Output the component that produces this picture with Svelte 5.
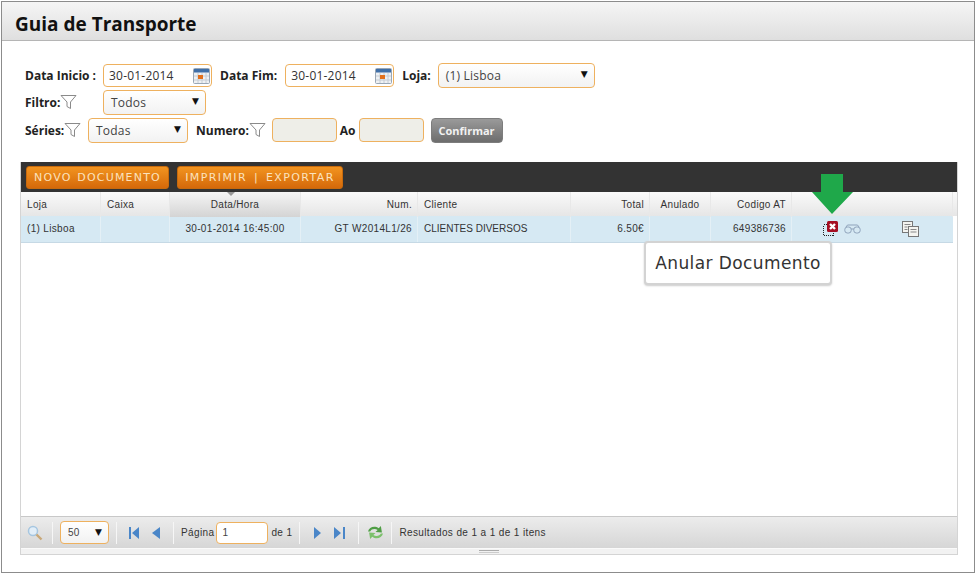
<script lang="ts">
  const cols = [
    { label: 'Loja', value: '(1) Lisboa', align: 'left', w: 80 },
    { label: 'Caixa', value: '', align: 'left', w: 69 },
    { label: 'Data/Hora', value: '30-01-2014 16:45:00', align: 'center', w: 131, sorted: true },
    { label: 'Num.', value: 'GT W2014L1/26', align: 'right', w: 117 },
    { label: 'Cliente', value: 'CLIENTES DIVERSOS', align: 'left', w: 153, tight: true },
    { label: 'Total', value: '6.50€', align: 'right', w: 79 },
    { label: 'Anulado', value: '', align: 'center', w: 61 },
    { label: 'Codigo AT', value: '649386736', align: 'right', w: 81 }
  ];
  const template = cols.map((c) => c.w + 'px').join(' ') + ' 161px';
</script>

{#snippet funnel()}
  <svg class="funnel" width="17" height="16" viewBox="0 0 17 16">
    <path d="M1 1.500h15L10.500 8v6.500L7 12.500V8z" fill="#fff" stroke="#8a8a8a" />
  </svg>
{/snippet}

{#snippet calendar()}
  <svg class="cal" width="17" height="16" viewBox="0 0 17 16">
    <rect x="0.5" y="0.5" width="16" height="15" rx="1" fill="#eef1f4" stroke="#9aa7b5" />
    <rect x="1" y="1" width="15" height="3.500" fill="#3f6fa8" />
    <path d="M1 8h15M1 12h15M5 5v10M9 5v10M13 5v10" stroke="#c6ccd3" />
    <rect x="5" y="7" width="5" height="4" fill="#e2701c" />
  </svg>
{/snippet}

<div class="page">
  <header class="title"><h1>Guia de Transporte</h1></header>

  <form class="filters">
    <div class="row row1">
      <span class="lbl first">Data Inicio :</span>
      <span class="field date">30-01-2014 {@render calendar()}</span>
      <span class="lbl l8">Data Fim:</span>
      <span class="field date">30-01-2014 {@render calendar()}</span>
      <span class="lbl l8 l7">Loja:</span>
      <span class="field select loja">(1) Lisboa <i>▼</i></span>
    </div>
    <div class="row row2">
      <span class="lbl filtro">Filtro:{@render funnel()}</span>
      <span class="field select todos">Todos <i>▼</i></span>
    </div>
    <div class="row row3">
      <span class="lbl series">Séries:{@render funnel()}</span>
      <span class="field select todas">Todas <i>▼</i></span>
      <span class="lbl l8 numero">Numero:{@render funnel()}</span>
      <span class="field blank"></span>
      <span class="lbl ao">Ao</span>
      <span class="field blank"></span>
      <button type="button" class="confirm">Confirmar</button>
    </div>
  </form>

  <section class="grid">
    <div class="toolbar">
      <button type="button" class="orange novo">NOVO DOCUMENTO</button>
      <button type="button" class="orange imprimir">IMPRIMIR | EXPORTAR</button>
    </div>

    <div class="thead" style="grid-template-columns: {template} 1fr">
      {#each cols as c}
        <div class="th {c.align}" class:sorted={c.sorted}>{c.label}</div>
      {/each}
      <div class="th"></div>
      <div class="th last"></div>
    </div>

    <div class="tr" style="grid-template-columns: {template}">
      {#each cols as c}
        <div class="td {c.align}" class:tight={c.tight}>{c.value}</div>
      {/each}
      <div class="td actions">
        <svg class="del" width="15" height="15" viewBox="0 0 15 15">
          <rect x="0.5" y="3.500" width="10" height="11" fill="none" stroke="#222" stroke-dasharray="1 1" shape-rendering="crispEdges" />
          <rect x="4" y="0" width="11" height="11" rx="1.500" fill="#a50e22" />
          <path d="M7 3l5 5M12 3l-5 5" stroke="#fff" stroke-width="2.400" />
        </svg>
        <svg class="glasses" width="17" height="10" viewBox="0 0 17 10">
          <rect x="0.8" y="3" width="6.400" height="6" rx="2.500" fill="none" stroke="#8fa3bb" />
          <rect x="9.800" y="3" width="6.400" height="6" rx="2.500" fill="none" stroke="#8fa3bb" />
          <path d="M7 5h3M2 3l1.500-2h10L15 3" fill="none" stroke="#8fa3bb" />
        </svg>
        <svg class="copy" width="17" height="16" viewBox="0 0 17 16">
          <rect x="0.5" y="0.5" width="10" height="11" fill="#f4f4f0" stroke="#777" />
          <rect x="6.5" y="5.500" width="10" height="10" fill="#f4f4f0" stroke="#777" />
          <path d="M2.500 3.500h6M2.500 6h3M2.500 8.500h3M8.500 8.500h6M8.500 11h6" stroke="#888" />
        </svg>
      </div>
    </div>

    <div class="body"></div>

    <footer class="pager">
      <svg class="zoom" width="16" height="16" viewBox="0 0 16 16">
        <circle cx="6" cy="6" r="4.500" fill="#e2eef8" stroke="#a6c6e0" stroke-width="1.500" />
        <path d="M9.500 9.500l5 5" stroke="#c9a878" stroke-width="2.400" />
      </svg>
      <span class="sep"></span>
      <span class="field select size">50 <i>▼</i></span>
      <span class="sep"></span>
      <svg class="first-ic" width="11" height="12" viewBox="0 0 11 12"><path d="M0 0h2v12H0zM10 0v12L3 6z" fill="#4a86c8" /></svg>
      <svg class="prev" width="8" height="12" viewBox="0 0 8 12"><path d="M8 0v12L0 6z" fill="#4a86c8" /></svg>
      <span class="sep"></span>
      <span class="txt">Página</span>
      <span class="field page-no">1</span>
      <span class="txt">de 1</span>
      <span class="sep"></span>
      <svg class="next" width="7" height="12" viewBox="0 0 7 12"><path d="M0 0v12l7-6z" fill="#4a86c8" /></svg>
      <svg class="last-ic" width="11" height="12" viewBox="0 0 11 12"><path d="M0 0v12l7-6zM9 0h2v12H9z" fill="#4a86c8" /></svg>
      <span class="sep"></span>
      <svg class="refresh" width="17" height="15" viewBox="2 1 14 14">
        <path d="M2 7c1-4 6-6 10-3l2-2 1 6-6-.5 2-1.800C9 4 5 4.500 4 7z" fill="#4f9e45" />
        <path d="M16 9c-1 4-6 6-10 3l-2 2-1-6 6 .5-2 1.800c2 1.700 6 1.200 7-1.300z" fill="#7cc06c" />
      </svg>
      <span class="sep"></span>
      <span class="txt">Resultados de 1 a 1 de 1 itens</span>
    </footer>
    <div class="resize"><span></span></div>

    <svg class="arrow" width="42" height="41" viewBox="0 0 42 41">
      <path d="M10 0h22v18h10L21 40 1 18h9z" fill="#1fa84a" />
    </svg>
    <div class="tooltip">Anular Documento</div>
  </section>
</div>

<style>
  :global(body) {
    margin: 0;
    background: #fff;
  }

  .page {
    box-sizing: border-box;
    width: 974px;
    height: 572px;
    margin: 1px 0 0 1px;
    border: 1px solid #8c8c8c;
    background: #fff;
    overflow: hidden;
  }

  .title {
    height: 39px;
    background: linear-gradient(#f5f5f5, #dfdfdf);
    border-bottom: 1px solid #b5b5b5;
    box-sizing: border-box;
    padding: 5px 0 0 13px;
  }
  h1 {
    margin: 0;
    font: bold 19px/34px 'Open Sans', sans-serif;
    color: #111;
    white-space: nowrap;
  }

  .filters {
    padding: 21px 0 0 23px;
    font: 12px 'Open Sans', sans-serif;
    color: #333;
  }
  .row {
    display: flex;
    align-items: center;
  }
  .row1 { height: 26px; }
  .row2 { height: 26px; margin-top: 1px; }
  .row3 { height: 26px; margin-top: 2px; }

  .lbl {
    display: inline-flex;
    align-items: center;
    font-weight: bold;
    font-size: 12px;
    color: #222;
    white-space: nowrap;
  }
  .first { margin-right: 7px; }
  .l8 { margin: 0 8px; }
  .l7 { margin-right: 7px; }
  .numero { margin-right: 6px; }
  .filtro { width: 78px; }
  .series { width: 63px; }
  .ao { margin: 0 3px; }

  .field {
    box-sizing: border-box;
    display: inline-flex;
    align-items: center;
    position: relative;
    border: 1px solid #eeb15f;
    border-radius: 4px;
    background: #fff;
    padding-left: 5px;
    color: #444;
    letter-spacing: 0.2px;
  }
  .date {
    width: 109px;
    height: 23px;
    color: #333;
  }
  .cal {
    position: absolute;
    right: 1px;
    top: 3px;
  }
  .select {
    background: linear-gradient(#fff, #f2f2f2);
  }
  .select i {
    position: absolute;
    right: 6px;
    top: 50%;
    transform: translateY(-58%);
    font: 9px 'DejaVu Sans', sans-serif;
    color: #111;
  }
  .loja { width: 157px; height: 25px; padding-left: 7px; }
  .todos { width: 103px; height: 25px; padding-left: 7px; }
  .todas { width: 100px; height: 25px; padding-left: 7px; }
  .blank {
    width: 65px;
    height: 24px;
    background: #eeeee8;
  }

  .confirm {
    margin-left: 7px;
    width: 72px;
    height: 25px;
    padding: 0;
    border: 1px solid #7d7d7d;
    border-radius: 4px;
    background: linear-gradient(#9a9a9a, #6d6d6d);
    color: #f2f2f2;
    font: bold 11px 'Open Sans', sans-serif;
  }

  .grid {
    position: relative;
    box-sizing: border-box;
    margin: 19px 0 0 18px;
    width: 938px;
    height: 393px;
    border: 1px solid #d4d4d4;
    border-top: 0;
    display: flex;
    flex-direction: column;
    font: 10px 'Liberation Sans', sans-serif;
    color: #333;
  }

  .toolbar {
    box-sizing: border-box;
    height: 30px;
    background: #333;
    display: flex;
    align-items: center;
    gap: 8px;
    padding: 0 0 0 5px;
    flex: none;
  }
  .orange {
    box-sizing: border-box;
    height: 23px;
    padding: 0;
    border: 1px solid #c86a0c;
    border-radius: 3px;
    background: linear-gradient(#f29420, #d5690a);
    color: #fbe2bd;
    font: 11px 'DejaVu Sans', sans-serif;
    letter-spacing: 1.200px;
    word-spacing: 1px;
    white-space: nowrap;
  }
  .novo { width: 143px; }
  .imprimir { width: 166px; letter-spacing: 1.400px; word-spacing: 2px; }

  .thead,
  .tr {
    display: grid;
    flex: none;
  }
  .thead {
    height: 24px;
    background: linear-gradient(#fafafa, #e6e6e6);
  }
  .th,
  .td {
    box-sizing: border-box;
    padding: 0 5px 0 6px;
    border-right: 1px solid #e8e8e8;
    white-space: nowrap;
    letter-spacing: 0.33px;
  }
  .th {
    line-height: 25px;
    position: relative;
  }
  .th.last { border-right: 0; }
  .sorted {
    background: linear-gradient(#f5f5f5, #d4d4d4);
  }
  .sorted::before {
    content: '';
    position: absolute;
    top: 0;
    left: 57px;
    border: 4px solid transparent;
    border-top: 4px solid #999;
  }
  .left { text-align: left; }
  .center { text-align: center; padding: 0 5px; }
  .right { text-align: right; }

  .tr {
    width: 932px;
    height: 27px;
    background: #d6e9f3;
    border-bottom: 1px solid #c6d9e5;
    box-sizing: border-box;
  }
  .td {
    line-height: 25px;
    border-right-color: #e4f0f6;
  }
  .td.tight { letter-spacing: 0; }
  .actions {
    display: flex;
    align-items: center;
    padding-left: 31px;
    border-right: 0;
  }
  .del { margin-top: -2px; }
  .glasses { margin-left: 6px; }
  .copy { margin-left: 41px; margin-top: -1px; }

  .body { flex: 1; }

  .pager {
    box-sizing: border-box;
    height: 32px;
    flex: none;
    display: flex;
    align-items: center;
    padding-left: 6px;
    background: linear-gradient(#ececec, #d6d6d6);
    border-top: 1px solid #c8c8c8;
    font-size: 10px;
    letter-spacing: 0.38px;
  }
  .sep {
    width: 1px;
    height: 22px;
    background: #f6f6f6;
    margin: 0 7px;
    flex: none;
  }
  .zoom { margin-right: 2px; }
  .size {
    width: 49px;
    height: 23px;
    padding-left: 7px;
    font: 10px 'Liberation Sans', sans-serif;
  }
  .first-ic { margin-left: 5px; }
  .prev { margin-left: 12px; margin-right: 6px; }
  .next { margin-left: 7px; }
  .last-ic { margin-left: 13px; margin-right: 6px; }
  .txt { color: #333; }
  .page-no {
    width: 52px;
    height: 22px;
    margin: 0 3px 0 2px;
    padding-left: 5px;
    font: 10px 'Liberation Sans', sans-serif;
    letter-spacing: 0;
  }
  .refresh { margin: 0 0 0 1px; }

  .resize {
    height: 5px;
    flex: none;
    background: #f2f2f2;
    border-top: 1px solid #fafafa;
    display: flex;
    justify-content: center;
    align-items: center;
  }
  .resize span {
    width: 20px;
    height: 3px;
    border-top: 1px solid #aaa;
    border-bottom: 1px solid #ccc;
    box-sizing: border-box;
  }

  .arrow {
    position: absolute;
    left: 790px;
    top: 12px;
  }
  .tooltip {
    position: absolute;
    left: 623px;
    top: 79px;
    box-sizing: border-box;
    width: 188px;
    height: 44px;
    background: #fff;
    border: 2px solid #d3d3d3;
    border-radius: 4px;
    box-shadow: 0 1px 2px #ccc;
    font: 17px/40px 'DejaVu Sans', sans-serif;
    letter-spacing: 0.4px;
    text-align: center;
    color: #333;
    white-space: nowrap;
  }
</style>
